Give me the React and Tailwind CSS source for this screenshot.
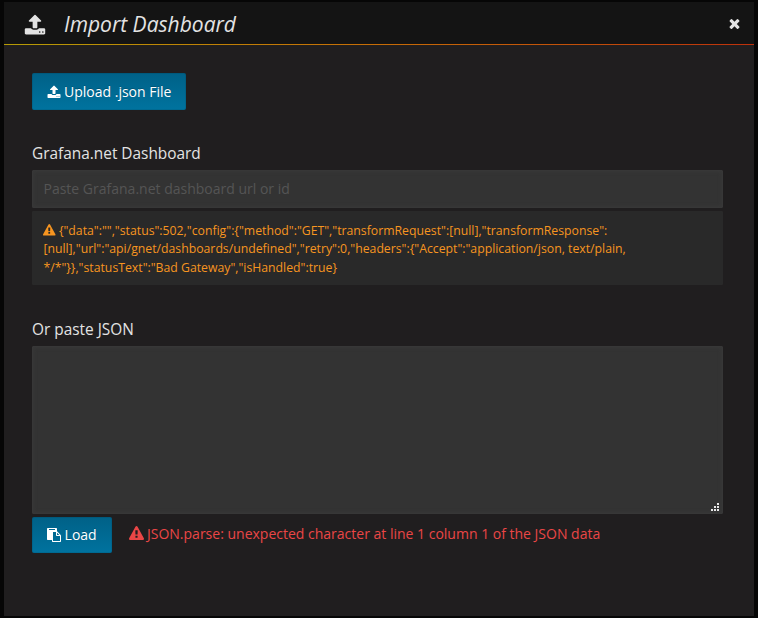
const UPLOAD =
  "M1344 1472q0-26-19-45t-45-19-45 19-19 45 19 45 45 19 45-19 19-45zm256 0q0-26-19-45t-45-19-45 19-19 45 19 45 45 19 45-19 19-45zm128-224v320q0 40-28 68t-68 28h-1472q-40 0-68-28t-28-68v-320q0-40 28-68t68-28h427q21 56 70.5 92t110.5 36h256q61 0 110.5-36t70.5-92h427q40 0 68 28t28 68zm-325-648q-17 40-59 40h-256v448q0 26-19 45t-45 19h-256q-26 0-45-19t-19-45v-448h-256q-42 0-59-40-17-39 14-69l448-448q18-19 45-19t45 19l448 448q31 30 14 69z";
const CLOSE =
  "M1490 1322q0 40-28 68l-136 136q-28 28-68 28t-68-28l-294-294-294 294q-28 28-68 28t-68-28l-136-136q-28-28-28-68t28-68l294-294-294-294q-28-28-28-68t28-68l136-136q28-28 68-28t68 28l294 294 294-294q28-28 68-28t68 28l136 136q28 28 28 68t-28 68l-294 294 294 294q28 28 28 68z";
const WARNING =
  "M1024 1375v-190q0-14-9.5-23.5t-22.5-9.5h-192q-13 0-22.5 9.5t-9.5 23.5v190q0 14 9.5 23.5t22.5 9.5h192q13 0 22.5-9.5t9.5-23.5zm-2-374l18-459q0-12-10-19-13-11-24-11h-220q-11 0-24 11-10 7-10 21l17 457q0 10 10 16.5t24 6.5h185q14 0 23.5-6.5t10.5-16.5zm-14-934l768 1408q35 63-2 126-17 29-46.5 46t-63.5 17h-1536q-34 0-63.5-17t-46.5-46q-37-63-2-126l768-1408q17-31 47-49t65-18 65 18 47 49z";
const PASTE =
  "M768 1664h896v-640h-416q-40 0-68-28t-28-68v-416h-384v1152zm256-1440v-64q0-13-9.5-22.5t-22.5-9.5h-704q-13 0-22.5 9.5t-9.5 22.5v64q0 13 9.5 22.5t22.5 9.5h704q13 0 22.5-9.5t9.5-22.5zm256 672h299l-299-299v299zm512 128v672q0 40-28 68t-68 28h-960q-40 0-68-28t-28-68v-160h-544q-40 0-68-28t-28-68v-1344q0-40 28-68t68-28h1088q40 0 68 28t28 68v328q21 13 36 28l408 408q28 28 48 76t20 88z";

function Icon({ d, className }) {
  return (
    <svg viewBox="0 0 1792 1792" fill="currentColor" aria-hidden="true" className={className}>
      <path d={d} />
    </svg>
  );
}

function Button({ icon, className, children }) {
  return (
    <button
      type="button"
      className={`flex items-center rounded-[2px] bg-linear-to-b from-[#006187] to-[#00739f] pl-[15px] text-[14px] text-white shadow-[inset_0_0_0_1px_rgba(0,0,0,0.08)] [text-shadow:0_-1px_0_rgba(0,0,0,0.2)] ${className}`}
    >
      <Icon d={icon} className="mr-[3px] size-[14px] shrink-0" />
      <span className="whitespace-nowrap">{children}</span>
    </button>
  );
}

const GRIP = [[6, 0], [3, 3], [6, 3], [0, 6], [3, 6], [6, 6]];

export default function App() {
  return (
    <div className="h-[618px] w-[758px] bg-[#060606] px-1 py-0.5 font-['Open_Sans',sans-serif] text-[#e3e3e3]">
      <div className="flex h-[614px] flex-col bg-[#201e1f]">
        <header className="flex h-[42px] shrink-0 items-center bg-[#141414] pl-5">
          <Icon d={UPLOAD} className="mt-[3px] size-[22px]" />
          <h1 className="ml-[18px] pt-px text-[21px] leading-[30px] italic">Import Dashboard</h1>
          <button type="button" aria-label="Close" className="mr-[12px] ml-auto">
            <Icon d={CLOSE} className="size-[15px]" />
          </button>
        </header>
        <div className="h-px shrink-0 bg-linear-to-r from-[#b59b05] via-[#c66c06] to-[#bd300b]" />

        <main className="flex flex-col items-start px-7 pt-7">
          <Button icon={UPLOAD} className="h-[37px] w-[154px]">Upload .json File</Button>

          <label className="mt-[33px] text-[15.4px] leading-[21px]">Grafana.net Dashboard</label>
          <input
            className="mt-[6px] h-[38px] w-[691px] rounded-[1px] border border-[#373737] bg-[#333] px-[10.5px] pb-[2px] text-[14px] shadow-[inset_0_0_4px_#3a3a3a] placeholder:text-[#555]"
            placeholder="Paste Grafana.net dashboard url or id"
          />
          <div className="mt-[3px] h-[74px] w-[691px] rounded-[1px] bg-[#292929] px-[11.4px] pt-[10.5px] text-[12.25px] leading-[18.6px] text-[#f79520]">
            <Icon d={WARNING} className="mr-[3px] inline-block size-[12.5px] align-[-2px]" />
            {'{"data":"","status":502,"config":{"method":"GET","transformRequest":[null],"transformResponse":'}
            <br />
            {'[null],"url":"api/gnet/dashboards/undefined","retry":0,"headers":{"Accept":"application/json, text/plain,'}
            <br />
            {'*/*"}},"statusText":"Bad Gateway","isHandled":true}'}
          </div>

          <label className="mt-[34px] text-[15.4px] leading-[21px]">Or paste JSON</label>
          <div className="relative mt-[6px] h-[168px] w-[691px]">
            <textarea className="block size-full resize-none rounded-[1px] border border-[#373737] bg-[#333] shadow-[inset_0_0_4px_#3a3a3a]" />
            <svg className="absolute right-1 bottom-[3px]" width="8" height="8" shapeRendering="crispEdges" fill="#e8e8e8">
              {GRIP.map(([x, y]) => (
                <rect key={`${x}-${y}`} x={x} y={y} width="2" height="2" />
              ))}
            </svg>
          </div>

          <div className="mt-[3px] flex">
            <Button icon={PASTE} className="h-[36px] w-[80px] pb-px">
              <span className="ml-[0.6px]">Load</span>
            </Button>
            <div className="ml-[17px] flex h-[33px] items-center text-[14px] text-[#ea4646]">
              <Icon d={WARNING} className="mr-[3px] size-[15px]" />
              JSON.parse: unexpected character at line 1 column 1 of the JSON data
            </div>
          </div>
        </main>
      </div>
    </div>
  );
}
